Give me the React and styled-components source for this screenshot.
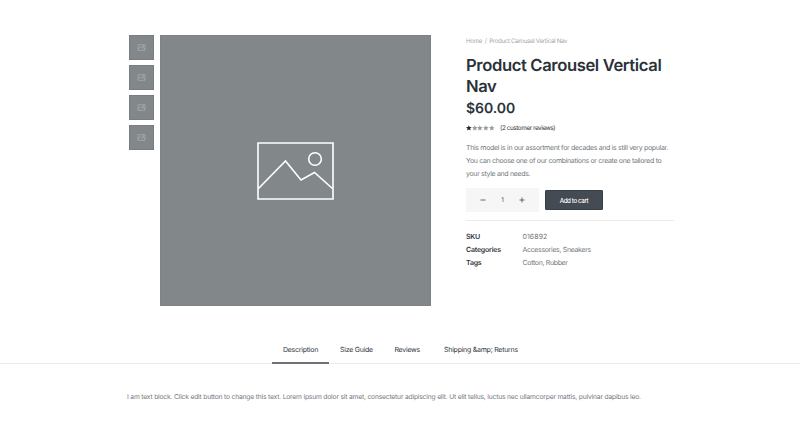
import React from "react";
import styled, { createGlobalStyle } from "styled-components";

const GlobalStyle = createGlobalStyle`
  * { box-sizing: border-box; }
  body {
    margin: 0;
    background: #fff;
    font-family: Inter, "Liberation Sans", sans-serif;
    color: #2b3238;
    overflow: hidden;
    text-rendering: geometricPrecision;
  }
`;

const Page = styled.div`
  width: 800px;
  height: 437px;
  background: #fff;
`;

const Product = styled.main`
  display: flex;
  align-items: flex-start;
  padding: 35px 0 0 129px;
  height: 337px;
`;

const Thumbs = styled.div`
  display: flex;
  flex-direction: column;
  gap: 5px;
  width: 25px;
  margin-right: 6px;
`;

const Thumb = styled.div`
  display: grid;
  place-items: center;
  height: 25px;
  padding-bottom: 1px;
  background: #82878a;
  border: 1px solid #777d82;
  color: #b4b8ba;
`;

const MainImage = styled.div`
  display: grid;
  place-items: center;
  width: 271px;
  height: 271px;
  background: #82878a;
  border: 1px solid #7c8286;
  color: #fff;
`;

const Summary = styled.section`
  display: flex;
  flex-direction: column;
  width: 208px;
  margin-left: 35px;
`;

const Breadcrumb = styled.nav`
  display: flex;
  gap: 2.6px;
  height: 13px;
  font-size: 6.2px;
  line-height: 13px;
  letter-spacing: -0.33px;
  color: #a3a6a9;
  white-space: nowrap;
`;

const Title = styled.h1`
  margin: 8px 0 0;
  font-size: 16.6px;
  line-height: 21px;
  font-weight: 600;
  letter-spacing: -0.37px;
  color: #2a3239;
  white-space: nowrap;
`;

const Price = styled.div`
  margin-top: 1px;
  font-size: 14px;
  line-height: 20px;
  font-weight: 600;
  letter-spacing: -0.05px;
  color: #2a3239;
`;

const Rating = styled.div`
  display: flex;
  align-items: center;
  height: 10px;
  margin-top: 3.5px;
`;

const Stars = styled.div`
  display: flex;
  width: 34px;
`;

const ReviewCount = styled.span`
  font-size: 6.4px;
  line-height: 10px;
  letter-spacing: -0.43px;
  color: #343b42;
  white-space: nowrap;
`;

const Copy = styled.p`
  margin: 9.5px 0 0;
  font-size: 7px;
  line-height: 12.8px;
  letter-spacing: -0.33px;
  color: #74797e;
  white-space: nowrap;
`;

const CartRow = styled.div`
  display: flex;
  align-items: center;
  gap: 6px;
  margin-top: 8px;
  height: 24px;
`;

const Quantity = styled.div`
  display: grid;
  grid-template-columns: repeat(3, 19.5px);
  justify-content: center;
  place-items: center;
  width: 73px;
  height: 24px;
  background: #f6f6f6;
  color: #50565b;
  font-size: 6.4px;
`;

const CartButton = styled.button`
  width: 58px;
  height: 20px;
  padding: 0;
  border: 1px solid #384047;
  border-radius: 1px;
  background: #444b52;
  color: #fff;
  font: 500 6.2px Inter, sans-serif;
  letter-spacing: -0.38px;
`;

const Meta = styled.dl`
  display: grid;
  grid-template-columns: 56.5px 1fr;
  grid-auto-rows: 12.8px;
  margin: 8px 0 0;
  padding-top: 9.6px;
  border-top: 1px solid #ebebeb;
  font-size: 7px;
  line-height: 12.8px;
  white-space: nowrap;
`;

const Term = styled.dt`
  font-weight: 600;
  letter-spacing: -0.22px;
  color: #30373d;
`;

const Detail = styled.dd`
  margin: 0;
  letter-spacing: ${(p) => (p.$numeric ? "0.05px" : "-0.34px")};
  color: #74797e;
`;

const TabBar = styled.nav`
  display: flex;
  height: 27px;
  padding-left: 272px;
  border-bottom: 1px solid #ebebeb;
`;

const Tab = styled.div`
  width: ${(p) => p.$width}px;
  height: 27px;
  border-bottom: 2px solid ${(p) => (p.$active ? "#6c7277" : "transparent")};
  font-size: 7px;
  line-height: 26px;
  letter-spacing: -0.25px;
  color: #30373d;
  text-align: center;
  white-space: nowrap;
`;

const Panel = styled.section`
  padding: 27px 0 0 127px;
  font-size: 6.7px;
  line-height: 13px;
  letter-spacing: -0.173px;
  color: #73787d;
  white-space: nowrap;
`;

function Picture() {
  return (
    <svg width="77" height="58" viewBox="0 0 77 58" fill="none" stroke="currentColor" strokeWidth="1.6">
      <path d="M1 1H76V57H1Z M1 47L28.5 19L44 38L57.5 30.5L76 47" />
      <circle cx="58" cy="17" r="6.3" />
    </svg>
  );
}

function SmallPicture() {
  return (
    <svg width="9" height="7" viewBox="0 0 9 7" fill="none" stroke="currentColor" strokeWidth="0.6">
      <path d="M1 .7H8V6.3H1Z M1 5.2L3.5 2.5L5 4.3L6.2 3.6L8 5.2" />
      <circle cx="6.3" cy="2.2" r=".6" />
    </svg>
  );
}

function Star({ filled }) {
  return (
    <svg width="5.7" height="6" viewBox="0 0 20 20" fill={filled ? "#20282e" : "#969b9f"}>
      <path d="M10 0L12.8 6.6L20 7.3L14.6 12.1L16.2 19.2L10 15.5L3.8 19.2L5.4 12.1L0 7.3L7.2 6.6Z" />
    </svg>
  );
}

function Sign({ plus }) {
  return (
    <svg width="6" height="6" viewBox="0 0 6 6" stroke="#555b60" strokeWidth="0.9">
      <path d={plus ? "M.5 3H5.5M3 .5V5.5" : "M.5 3H5.5"} />
    </svg>
  );
}

const tabs = [
  ["Description", 57],
  ["Size Guide", 55],
  ["Reviews", 46.5],
  ["Shipping &amp; Returns", 101],
];

const meta = [
  ["SKU", "016892"],
  ["Categories", "Accessories, Sneakers"],
  ["Tags", "Cotton, Rubber"],
];

export default function App() {
  return (
    <Page>
      <GlobalStyle />
      <Product>
        <Thumbs>
          {[0, 1, 2, 3].map((i) => (
            <Thumb key={i}><SmallPicture /></Thumb>
          ))}
        </Thumbs>
        <MainImage><Picture /></MainImage>
        <Summary>
          <Breadcrumb><span>Home</span><span>/</span><span>Product Carousel Vertical Nav</span></Breadcrumb>
          <Title>Product Carousel Vertical<br />Nav</Title>
          <Price>$60.00</Price>
          <Rating>
            <Stars>{[0, 1, 2, 3, 4].map((i) => <Star key={i} filled={i === 0} />)}</Stars>
            <ReviewCount>(2 customer reviews)</ReviewCount>
          </Rating>
          <Copy>
            This model is in our assortment for decades and is still very popular.<br />
            You can choose one of our combinations or create one tailored to<br />
            your style and needs.
          </Copy>
          <CartRow>
            <Quantity><Sign /><span>1</span><Sign plus /></Quantity>
            <CartButton>Add to cart</CartButton>
          </CartRow>
          <Meta>
            {meta.map(([term, detail]) => (
              <React.Fragment key={term}>
                <Term>{term}</Term>
                <Detail $numeric={term === "SKU"}>{detail}</Detail>
              </React.Fragment>
            ))}
          </Meta>
        </Summary>
      </Product>
      <TabBar>
        {tabs.map(([label, width], i) => <Tab key={label} $width={width} $active={i === 0}>{label}</Tab>)}
      </TabBar>
      <Panel>
        I am text block. Click edit button to change this text. Lorem ipsum dolor sit amet, consectetur adipiscing elit. Ut elit tellus, luctus nec ullamcorper mattis, pulvinar dapibus leo.
      </Panel>
    </Page>
  );
}
